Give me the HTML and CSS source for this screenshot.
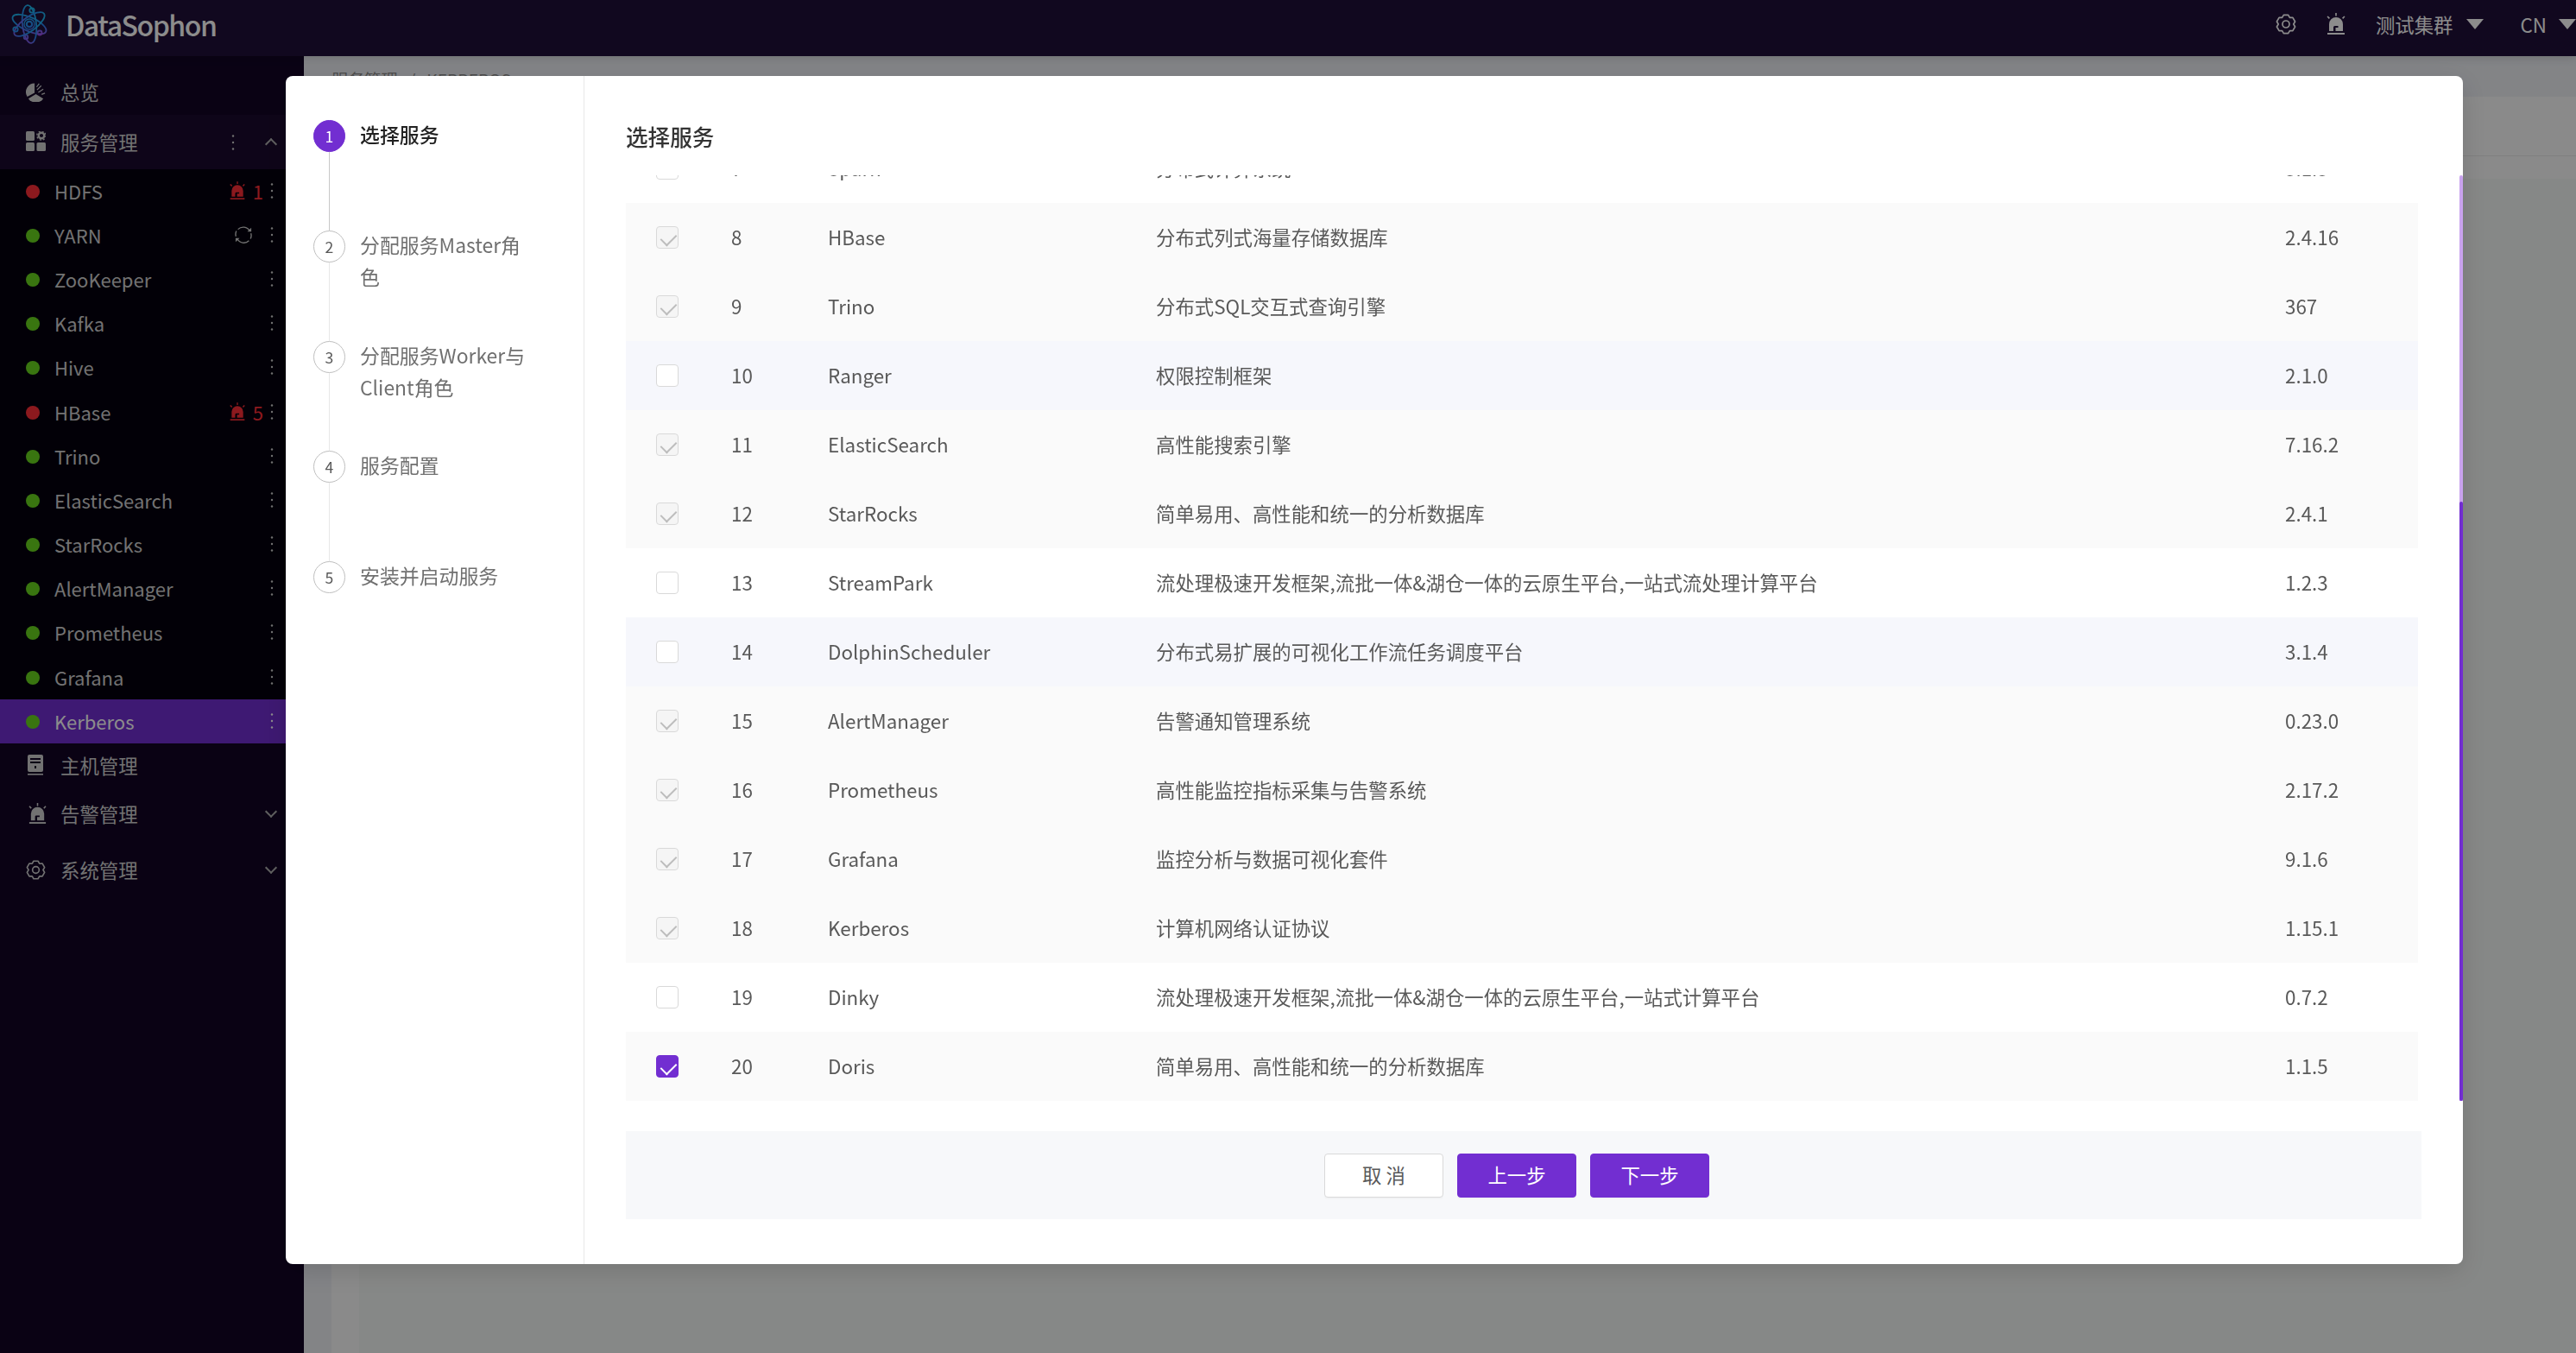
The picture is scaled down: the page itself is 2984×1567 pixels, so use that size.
FILE: index.html
```html
<!DOCTYPE html>
<html lang="zh-CN">
<head>
  <meta charset="UTF-8">
  <title>DataSophon</title>
  <link rel="stylesheet" href="styles.css">
</head>
<body>
  <svg class="sprite" width="0" height="0">
    <defs>
      <linearGradient id="logoGrad" gradientUnits="userSpaceOnUse" x1="8" y1="2" x2="34" y2="46">
        <stop offset="0" stop-color="#14d8ec"/>
        <stop offset="0.55" stop-color="#2a84f0"/>
        <stop offset="1" stop-color="#f02ce8"/>
      </linearGradient>
    </defs>
    <symbol id="i-alarm" viewBox="0 0 24 26">
      <path fill-rule="evenodd" d="M4 21v-8a8 8 0 0 1 16 0v8zM9 21h2.500v-4h3v-2h-4a1.500 1.500 0 0 0-1.500 1.500z"/>
      <rect x="2" y="23" width="20" height="2"/>
      <path d="M11.200 0h1.600v3.500h-1.600zM1.500 4.500l1.200-1.100 2.300 2.400-1.200 1.100zM22.500 4.500l-1.200-1.100-2.300 2.400 1.200 1.100z"/>
    </symbol>
    <symbol id="i-gear" viewBox="0 0 24 24">
      <path fill="none" stroke="currentColor" stroke-width="1.700" stroke-linejoin="round" d="M9.340 1.330L14.660 1.330L16.400 4.380L19.910 4.350L22.570 8.960L20.800 12L22.570 15.040L19.910 19.650L16.400 19.620L14.660 22.670L9.340 22.670L7.600 19.620L4.090 19.650L1.430 15.040L3.200 12L1.430 8.960L4.090 4.350L7.600 4.380Z"/>
      <circle cx="12" cy="12" r="4" fill="none" stroke="currentColor" stroke-width="1.700"/>
    </symbol>
    <symbol id="i-pie" viewBox="0 0 24 24">
      <path d="M10.500 13V1.500A10.500 10.500 0 0 0 1.700 17.700z"/>
      <path d="M12 14.500L3 20a11 11 0 0 0 18 0z"/>
      <path fill="none" stroke="currentColor" stroke-width="1.300" d="M13 6l3-4M13.500 9.500l5-5M15 12.500l6-4M19 15l4-1.500"/>
    </symbol>
    <symbol id="i-grid" viewBox="0 0 23 23">
      <rect x="0" y="0" width="10" height="11" rx="1.500"/>
      <rect x="0" y="13" width="10" height="10" rx="1.500"/>
      <rect x="12.500" y="13" width="10.500" height="10" rx="1.500"/>
      <circle cx="18" cy="5" r="3.300" fill="none" stroke="currentColor" stroke-width="2.400"/>
      <circle cx="18" cy="5" r="5.200" fill="none" stroke="currentColor" stroke-width="1.400" stroke-dasharray="2 2.100"/>
    </symbol>
    <symbol id="i-server" viewBox="0 0 18 24">
      <path fill-rule="evenodd" d="M2 0h14a2 2 0 0 1 2 2v16a2 2 0 0 1-2 2H2a2 2 0 0 1-2-2V2a2 2 0 0 1 2-2zM3 4v2h12V4zM3 8v2h12V8zM8 13v3h2v-3z"/>
      <rect x="0" y="22" width="18" height="1.600"/>
    </symbol>
    <symbol id="i-kebab" viewBox="0 0 4 18">
      <circle cx="2" cy="1.500" r="1.200"/>
      <circle cx="2" cy="9" r="1.200"/>
      <circle cx="2" cy="16.500" r="1.200"/>
    </symbol>
    <symbol id="i-sync" viewBox="0 0 22 24">
      <path fill="none" stroke="currentColor" stroke-width="1.500" d="M19 7A9.500 9.500 0 0 0 4 5M3 17a9.500 9.500 0 0 0 15 2.500M1.500 14A9.500 9.500 0 0 1 2 7M20.500 10a9.500 9.500 0 0 1-.500 7"/>
      <path d="M16 8h5V3zM6 16H1v5z"/>
    </symbol>
  </svg>

  <header class="topbar">
    <div class="brand">
      <svg class="brand-logo" viewBox="0 0 42 46">
        <g fill="none" stroke="url(#logoGrad)" stroke-width="1.800">
          <ellipse cx="21" cy="23" rx="21" ry="8" transform="rotate(24 21 23)"/>
          <ellipse cx="21" cy="23" rx="22" ry="8" transform="rotate(84 21 23)"/>
          <ellipse cx="21" cy="23" rx="21" ry="8" transform="rotate(144 21 23)"/>
          <circle cx="21" cy="23" r="6" stroke-width="1.400"/>
          <circle cx="21" cy="23" r="3.200" stroke-width="2.200"/>
          <circle cx="24" cy="7" r="2.700"/>
          <circle cx="5" cy="29" r="2.700"/>
          <circle cx="33" cy="33" r="2.500"/>
          <circle cx="17" cy="38" r="2.300"/>
        </g>
      </svg>
      <span class="brand-name">DataSophon</span>
    </div>
    <div class="topbar-right">
      <svg class="top-gear"><use href="#i-gear"/></svg>
      <svg class="top-alarm"><use href="#i-alarm"/></svg>
      <span class="top-text cluster">测试集群</span>
      <i class="caret"></i>
      <span class="top-text lang">CN</span>
      <i class="caret caret-last"></i>
    </div>
  </header>

  <div class="shell">
    <nav class="sidebar">
      <a class="menu-item item-home"><svg class="menu-icon"><use href="#i-pie"/></svg>总览</a>
      <a class="menu-item item-service">
        <svg class="menu-icon"><use href="#i-grid"/></svg>服务管理
        <svg class="kebab kebab-title"><use href="#i-kebab"/></svg>
        <i class="chevron chevron-up"></i>
      </a>
      <ul class="submenu">
        <li class="sub-item"><i class="dot dot-bad"></i>HDFS<span class="sub-alert"><svg class="sub-alarm"><use href="#i-alarm"/></svg>1</span><svg class="kebab"><use href="#i-kebab"/></svg></li>
        <li class="sub-item"><i class="dot"></i>YARN<svg class="sub-sync"><use href="#i-sync"/></svg><svg class="kebab"><use href="#i-kebab"/></svg></li>
        <li class="sub-item"><i class="dot"></i>ZooKeeper<svg class="kebab"><use href="#i-kebab"/></svg></li>
        <li class="sub-item"><i class="dot"></i>Kafka<svg class="kebab"><use href="#i-kebab"/></svg></li>
        <li class="sub-item"><i class="dot"></i>Hive<svg class="kebab"><use href="#i-kebab"/></svg></li>
        <li class="sub-item"><i class="dot dot-bad"></i>HBase<span class="sub-alert"><svg class="sub-alarm"><use href="#i-alarm"/></svg>5</span><svg class="kebab"><use href="#i-kebab"/></svg></li>
        <li class="sub-item"><i class="dot"></i>Trino<svg class="kebab"><use href="#i-kebab"/></svg></li>
        <li class="sub-item"><i class="dot"></i>ElasticSearch<svg class="kebab"><use href="#i-kebab"/></svg></li>
        <li class="sub-item"><i class="dot"></i>StarRocks<svg class="kebab"><use href="#i-kebab"/></svg></li>
        <li class="sub-item"><i class="dot"></i>AlertManager<svg class="kebab"><use href="#i-kebab"/></svg></li>
        <li class="sub-item"><i class="dot"></i>Prometheus<svg class="kebab"><use href="#i-kebab"/></svg></li>
        <li class="sub-item"><i class="dot"></i>Grafana<svg class="kebab"><use href="#i-kebab"/></svg></li>
        <li class="sub-item sub-active"><i class="dot"></i>Kerberos<svg class="kebab"><use href="#i-kebab"/></svg></li>
      </ul>
      <a class="menu-item item-host"><svg class="menu-icon icon-server"><use href="#i-server"/></svg>主机管理</a>
      <a class="menu-item item-alert"><svg class="menu-icon icon-alarm"><use href="#i-alarm"/></svg>告警管理<i class="chevron"></i></a>
      <a class="menu-item item-system"><svg class="menu-icon"><use href="#i-gear"/></svg>系统管理<i class="chevron"></i></a>
    </nav>

    <main class="main">
      <div class="crumbs"><span>服务管理</span><span class="crumb-sep">/</span><span>KERBEROS</span></div>
      <section class="page">
        <div class="page-head"></div>
        <div class="page-body"></div>
      </section>
    </main>
  </div>

  <div class="overlay">
    <div class="modal">
      <aside class="steps">
        <div class="step step-current">
          <div class="step-mark"><span class="step-num">1</span><i class="step-line"></i></div>
          <div class="step-label">选择服务</div>
        </div>
        <div class="step">
          <div class="step-mark"><span class="step-num">2</span><i class="step-line"></i></div>
          <div class="step-label">分配服务Master角色</div>
        </div>
        <div class="step">
          <div class="step-mark"><span class="step-num">3</span><i class="step-line"></i></div>
          <div class="step-label">分配服务Worker与Client角色</div>
        </div>
        <div class="step">
          <div class="step-mark"><span class="step-num">4</span><i class="step-line"></i></div>
          <div class="step-label">服务配置</div>
        </div>
        <div class="step">
          <div class="step-mark"><span class="step-num">5</span></div>
          <div class="step-label">安装并启动服务</div>
        </div>
      </aside>

      <div class="content">
        <h3 class="content-title">选择服务</h3>
        <div class="list-area">
          <div class="table-clip">
            <table class="svc-table">
              <colgroup><col class="col-check"><col class="col-num"><col class="col-name"><col class="col-desc"><col></colgroup>
              <tbody>
                <tr><td><span class="check"></span></td><td>7</td><td>Spark</td><td>分布式计算系统</td><td>3.1.3</td></tr>
                <tr class="row-sel"><td><span class="check check-off"></span></td><td>8</td><td>HBase</td><td>分布式列式海量存储数据库</td><td>2.4.16</td></tr>
                <tr class="row-sel"><td><span class="check check-off"></span></td><td>9</td><td>Trino</td><td>分布式SQL交互式查询引擎</td><td>367</td></tr>
                <tr class="row-even"><td><span class="check"></span></td><td>10</td><td>Ranger</td><td>权限控制框架</td><td>2.1.0</td></tr>
                <tr class="row-sel"><td><span class="check check-off"></span></td><td>11</td><td>ElasticSearch</td><td>高性能搜索引擎</td><td>7.16.2</td></tr>
                <tr class="row-sel"><td><span class="check check-off"></span></td><td>12</td><td>StarRocks</td><td>简单易用、高性能和统一的分析数据库</td><td>2.4.1</td></tr>
                <tr><td><span class="check"></span></td><td>13</td><td>StreamPark</td><td>流处理极速开发框架,流批一体&amp;湖仓一体的云原生平台,一站式流处理计算平台</td><td>1.2.3</td></tr>
                <tr class="row-even"><td><span class="check"></span></td><td>14</td><td>DolphinScheduler</td><td>分布式易扩展的可视化工作流任务调度平台</td><td>3.1.4</td></tr>
                <tr class="row-sel"><td><span class="check check-off"></span></td><td>15</td><td>AlertManager</td><td>告警通知管理系统</td><td>0.23.0</td></tr>
                <tr class="row-sel"><td><span class="check check-off"></span></td><td>16</td><td>Prometheus</td><td>高性能监控指标采集与告警系统</td><td>2.17.2</td></tr>
                <tr class="row-sel"><td><span class="check check-off"></span></td><td>17</td><td>Grafana</td><td>监控分析与数据可视化套件</td><td>9.1.6</td></tr>
                <tr class="row-sel"><td><span class="check check-off"></span></td><td>18</td><td>Kerberos</td><td>计算机网络认证协议</td><td>1.15.1</td></tr>
                <tr><td><span class="check"></span></td><td>19</td><td>Dinky</td><td>流处理极速开发框架,流批一体&amp;湖仓一体的云原生平台,一站式计算平台</td><td>0.7.2</td></tr>
                <tr class="row-sel"><td><span class="check check-on"></span></td><td>20</td><td>Doris</td><td>简单易用、高性能和统一的分析数据库</td><td>1.1.5</td></tr>
              </tbody>
            </table>
          </div>
          <div class="scroll-track"><div class="scroll-thumb"></div></div>
        </div>
        <div class="actions">
          <button class="btn">取 消</button>
          <button class="btn btn-primary">上一步</button>
          <button class="btn btn-primary">下一步</button>
        </div>
      </div>
    </div>
  </div>
</body>
</html>
```

FILE: styles.css
```css
* {
  box-sizing: border-box;
}
html, body {
  height: 100%;
}
body {
  margin: 0;
  overflow: hidden;
  display: flex;
  flex-direction: column;
  font-family: "Noto Sans CJK SC", "Noto Sans", sans-serif;
  font-size: 22.4px;
  color: #595959;
  background: #f0f2f5;
}
.sprite {
  position: absolute;
}
svg {
  fill: currentColor;
}

/* top bar */
.topbar {
  height: 65px;
  flex: none;
  padding-bottom: 10px;
  display: flex;
  align-items: center;
  justify-content: space-between;
  background: #200f3a;
  color: #fff;
  box-shadow: 0 2px 10px rgba(0, 0, 0, 0.15);
  position: relative;
  z-index: 2;
}
.brand {
  display: flex;
  align-items: center;
  padding-left: 13px;
}
.brand-logo {
  width: 42px;
  height: 46px;
}
.brand-name {
  margin-left: 21px;
  font-size: 32px;
  font-weight: 500;
  letter-spacing: -1.5px;
  color: #fff;
}
.topbar-right {
  display: flex;
  align-items: center;
}
.top-gear {
  width: 24px;
  height: 24px;
}
.top-alarm {
  width: 24px;
  height: 26px;
  margin-left: 34px;
}
.top-text {
  font-size: 22.4px;
  color: #fff;
}
.cluster {
  margin-left: 34px;
}
.lang {
  margin-left: 43px;
}
.caret {
  width: 0;
  height: 0;
  margin-left: 15px;
  border-left: 10px solid transparent;
  border-right: 10px solid transparent;
  border-top: 12px solid #fff;
}
.caret-last {
  margin-left: 14px;
}

/* sidebar */
.shell {
  flex: 1;
  display: flex;
  min-height: 0;
}
.sidebar {
  width: 352px;
  flex: none;
  padding-top: 16px;
  background: #130526;
  color: #d0d0d0;
}
.menu-item {
  display: flex;
  align-items: center;
  padding-left: 30px;
  padding-bottom: 2px;
  position: relative;
}
.menu-icon {
  width: 23px;
  height: 23px;
  margin-right: 17px;
}
.icon-server {
  width: 18px;
  height: 24px;
  margin: 0 20px 0 2px;
}
.icon-alarm {
  width: 23px;
  height: 25px;
  margin: 0 15px 0 2px;
}
.item-home {
  height: 52px;
}
.item-service {
  height: 63px;
  background: #1b0a2e;
}
.item-host {
  height: 52px;
}
.item-alert {
  height: 60px;
}
.item-system {
  height: 70px;
}
.submenu {
  margin: 0;
  padding: 0;
  list-style: none;
  background: #05000e;
}
.sub-item {
  height: 51.2px;
  display: flex;
  align-items: center;
  padding: 0 35px 2px 30px;
  font-size: 22px;
}
.sub-active {
  background: #722ed1;
  color: #fff;
}
.dot {
  width: 16px;
  height: 16px;
  margin: 2px 17px 0 0;
  border-radius: 50%;
  background: #68d61e;
}
.dot-bad {
  background: #ff2f38;
}
.sub-alert {
  margin-left: auto;
  margin-right: 8px;
  display: flex;
  align-items: center;
  color: #ff2f38;
}
.sub-alarm {
  width: 20px;
  height: 24px;
  margin-right: 8px;
}
.sub-sync {
  width: 20px;
  height: 22px;
  margin-left: auto;
  margin-right: 21px;
}
.kebab {
  width: 4px;
  height: 18px;
  flex: none;
  margin-left: auto;
}
.sub-alert + .kebab,
.sub-sync + .kebab {
  margin-left: 0;
}
.kebab-title {
  position: absolute;
  right: 80px;
  top: 23px;
}
.chevron {
  position: absolute;
  right: 33px;
  top: 50%;
  width: 10px;
  height: 10px;
  margin-top: -8px;
  border-right: 2px solid #b0b0b0;
  border-bottom: 2px solid #b0b0b0;
  transform: rotate(45deg);
}
.chevron-up {
  margin-top: -3px;
  transform: rotate(-135deg);
}

/* page behind the dialog */
.main {
  flex: 1;
  display: flex;
  flex-direction: column;
  background: #eef0f5;
  padding-left: 32px;
}
.crumbs {
  height: 47px;
  flex: none;
  padding-top: 6px;
  display: flex;
  align-items: center;
  font-size: 19.2px;
  color: #8c8c8c;
}
.crumb-sep {
  margin: 0 13px;
}
.page {
  flex: 1;
  display: flex;
  flex-direction: column;
  background: #fbfbfb;
}
.page-head {
  height: 95px;
  flex: none;
  padding-bottom: 27px;
}
.page-head::after {
  content: "";
  display: block;
  height: 68px;
  border-bottom: 1px solid #e8e8e8;
}
.page-body {
  flex: 1;
  margin-left: 32px;
  background: #f5f8f6;
}

/* dialog */
.overlay {
  position: fixed;
  inset: 0;
  z-index: 5;
  padding: 88px 0 0 331px;
  background: rgba(0, 0, 0, 0.45);
}
.modal {
  width: 2522px;
  height: 1376px;
  display: flex;
  border-radius: 8px;
  background: #fff;
  box-shadow: 0 8px 32px rgba(0, 0, 0, 0.14);
  overflow: hidden;
}
.steps {
  width: 346px;
  flex: none;
  padding: 51px 0 0 32px;
  border-right: 1px solid #e8e8e8;
}
.step {
  height: 127.8px;
  display: flex;
  gap: 17px;
}
.step-mark {
  width: 37px;
  display: flex;
  flex-direction: column;
  align-items: center;
}
.step-num {
  width: 37px;
  height: 37px;
  flex: none;
  display: flex;
  align-items: center;
  justify-content: center;
  border: 1px solid #bfbfbf;
  border-radius: 50%;
  font-size: 17.6px;
  color: #595959;
}
.step-line {
  flex: 1;
  width: 1px;
  background: #e8e8e8;
}
.step-label {
  width: 205px;
  margin-top: -2px;
  line-height: 37px;
  font-size: 22.9px;
  color: #707070;
}
.step-current .step-num {
  border-color: #722ed1;
  background: #722ed1;
  color: #fff;
}
.step-current .step-line {
  background: #c8c8c8;
}
.step-current .step-label {
  font-weight: 500;
  color: #222;
}

.content {
  flex: 1;
  min-width: 0;
  padding-left: 48px;
  display: flex;
  flex-direction: column;
}
.content-title {
  height: 115px;
  flex: none;
  margin: 0;
  padding-top: 49px;
  line-height: 42px;
  font-size: 25.6px;
  font-weight: 500;
  color: #333;
}
.list-area {
  height: 1072px;
  flex: none;
  display: flex;
  justify-content: space-between;
}
.table-clip {
  width: 2076px;
  overflow: hidden;
}
.svc-table {
  width: 100%;
  margin-top: -48px;
  table-layout: fixed;
  border-collapse: collapse;
}
.col-check {
  width: 122px;
}
.col-num {
  width: 112px;
}
.col-name {
  width: 380px;
}
.col-desc {
  width: 1308px;
}
.svc-table tr {
  height: 80px;
}
.svc-table td {
  padding: 0 0 2px;
  white-space: nowrap;
}
.svc-table td:first-child {
  padding: 0 0 0 35px;
}
.row-sel {
  background: #fafafa;
}
.row-even {
  background: #f6f7fc;
}
.check {
  display: block;
  width: 26px;
  height: 26px;
  position: relative;
  border: 1px solid #d9d9d9;
  border-radius: 4px;
  background: #fff;
}
.check-off {
  background: #f5f5f5;
}
.check-on {
  border-color: #722ed1;
  background: #722ed1;
}
.check-off::after,
.check-on::after {
  content: "";
  position: absolute;
  left: 7.500px;
  top: 3.500px;
  width: 9px;
  height: 15px;
  border-right: 2.500px solid #bdbdbd;
  border-bottom: 2.500px solid #bdbdbd;
  transform: rotate(45deg);
}
.check-on::after {
  border-color: #fff;
}
.scroll-track {
  width: 4px;
  flex: none;
  padding-top: 378px;
  border-radius: 2px 2px 0 0;
  background: #c9a2ee;
}
.scroll-thumb {
  height: 694px;
  border-radius: 2px;
  background: #722ed1;
}
.actions {
  width: 2080px;
  height: 102px;
  margin-top: 35px;
  padding-right: 16px;
  display: flex;
  align-items: center;
  justify-content: center;
  gap: 16px;
  background: #f7f8fa;
}
.btn {
  width: 138px;
  height: 51px;
  padding: 0 0 3px;
  border: 1px solid #d9d9d9;
  border-radius: 4px;
  background: #fff;
  color: #595959;
  font-family: inherit;
  font-size: 22.4px;
  box-shadow: 0 2px 0 rgba(0, 0, 0, 0.02);
}
.btn-primary {
  border-color: #722ed1;
  background: #722ed1;
  color: #fff;
}
```
